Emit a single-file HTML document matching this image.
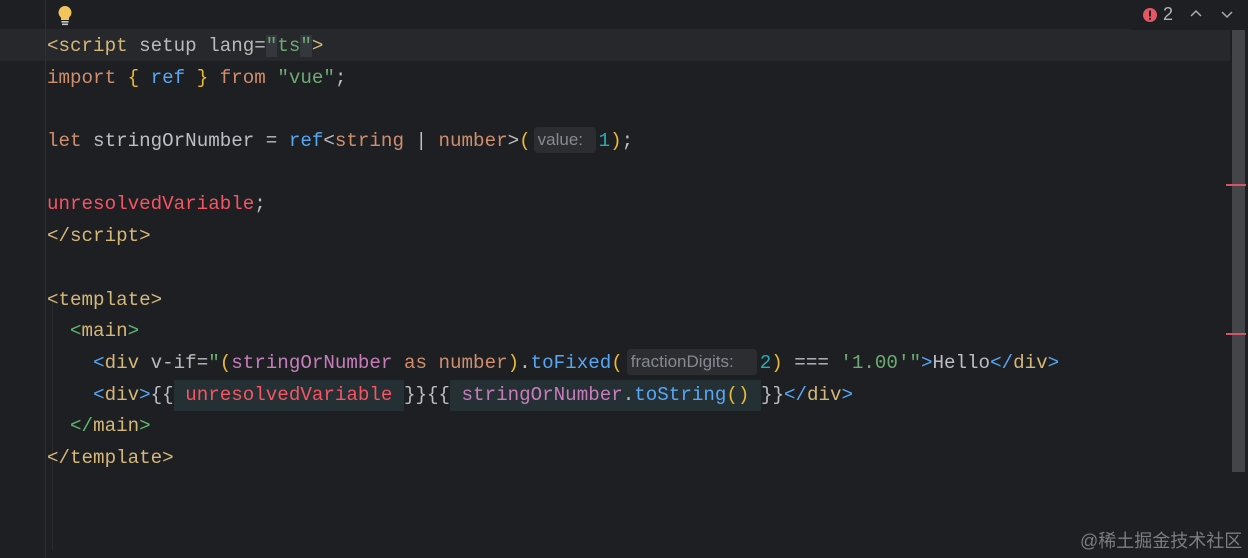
<!DOCTYPE html>
<html><head><meta charset="utf-8"><style>
html,body{margin:0;padding:0;width:1248px;height:558px;overflow:hidden;}
body{background:#1e1f22;position:relative;font-family:"Liberation Mono",monospace;}
.gut{position:absolute;left:45px;top:0;width:1px;height:558px;background:#2e3034;}
.cur{position:absolute;left:0;top:29px;width:1230px;height:32px;background:#26282c;}
.topbar{position:absolute;left:1130px;top:0;width:118px;height:30px;background:#1e1f22;}
.sb{position:absolute;left:1232px;top:30px;width:13px;height:442px;background:#444548;}
.mk{position:absolute;left:1226px;width:20px;height:2px;background:#d5546a;}
.code{position:absolute;left:47px;top:31px;font-size:19.2px;line-height:31.7px;color:#bcbec4;}
.l{height:31.7px;white-space:pre;}
.y{color:#d5b778}.o{color:#cf8e6d}.b{color:#56a8f5}.g{color:#6aab73}.gr{color:#5fb870}.n{color:#2aacb8}.p{color:#c77dbb}.r{color:#f75464}.a{color:#bababa}.br{color:#e8ba36}
.h{display:inline-block;background:#2b2d30;color:#868a91;font-family:"Liberation Sans",sans-serif;font-size:17px;line-height:26px;border-radius:4px;padding:0 4px;vertical-align:1px;box-sizing:border-box;}
.inj{background:#243033;display:inline-block;line-height:31.7px;}
.qb{background:#34373c;}
.wm{position:absolute;left:1080px;top:527px;font-family:"Liberation Sans","Noto Sans CJK SC",sans-serif;font-size:18px;color:#7b7d80;}
</style></head><body>
<div class="cur"></div>
<div class="gut"></div>
<div style="position:absolute;left:52px;top:300px;width:1px;height:250px;background:#292b2f"></div>
<div class="topbar"></div>
<svg style="position:absolute;left:55px;top:5px" width="20" height="22" viewBox="0 0 20 22"><path d="M10 1a6.5 6.5 0 0 0-4 11.6V15h8v-2.4A6.5 6.5 0 0 0 10 1z" fill="#f2c55c"/><rect x="6.5" y="16" width="7" height="1.6" fill="#c7c9cc"/><rect x="7" y="18.5" width="6" height="1.6" fill="#c7c9cc"/></svg>
<svg style="position:absolute;left:1142px;top:7px" width="16" height="16" viewBox="0 0 16 16"><circle cx="8" cy="8" r="7" fill="#e55765"/><rect x="7" y="3.5" width="2" height="6" fill="#1e1f22"/><rect x="7" y="10.8" width="2" height="2" fill="#1e1f22"/></svg>
<div style="position:absolute;left:1163px;top:4px;font-family:'Liberation Sans',sans-serif;font-size:18px;color:#b0b3b8">2</div>
<svg style="position:absolute;left:1189px;top:9px" width="14" height="10"><path d="M2 7l5-5 5 5" fill="none" stroke="#a8abb0" stroke-width="1.5"/></svg>
<svg style="position:absolute;left:1220px;top:9px" width="14" height="10"><path d="M2 3l5 5 5-5" fill="none" stroke="#a8abb0" stroke-width="1.5"/></svg>
<div class="sb"></div>
<div class="mk" style="top:184px"></div>
<div class="mk" style="top:333px"></div>
<div class="code" style="margin-top:0"><div class="l" style="margin-top:-2px;padding-top:2px"><span class="y">&lt;script</span> <span class="a">setup</span> <span class="a">lang</span>=<span class="g"><span class="qb">"</span>ts<span class="qb">"</span></span><span class="y">&gt;</span></div><div class="l"><span class="o">import</span> <span class="br">{</span> <span class="b">ref</span> <span class="br">}</span> <span class="o">from</span> <span class="g">"vue"</span>;</div><div class="l"></div><div class="l"><span class="o">let</span> stringOrNumber = <span class="b">ref</span>&lt;<span class="o">string</span> | <span class="o">number</span>&gt;<span class="br">(</span><span class="h" style="width:62px;margin-left:3px;margin-right:3px">value:</span><span class="n">1</span><span class="br">)</span>;</div><div class="l"></div><div class="l"><span class="r">unresolvedVariable</span>;</div><div class="l"><span class="y">&lt;/script&gt;</span></div><div class="l"></div><div class="l"><span class="y">&lt;template&gt;</span></div><div class="l">  <span class="gr">&lt;</span><span class="y">main</span><span class="gr">&gt;</span></div><div class="l">    <span class="b">&lt;</span><span class="y">div</span> <span class="a">v-if</span>=<span class="g">"</span><span class="br">(</span><span class="p">stringOrNumber</span> <span class="o">as</span> <span class="o">number</span><span class="br">)</span>.<span class="b">toFixed</span><span class="br">(</span><span class="h" style="width:130px;margin-left:4px;margin-right:3px">fractionDigits:</span><span class="n">2</span><span class="br">)</span> === <span class="g">'1.00'</span><span class="g">"</span><span class="b">&gt;</span>Hello<span class="b">&lt;/</span><span class="y">div</span><span class="b">&gt;</span></div><div class="l">    <span class="b">&lt;</span><span class="y">div</span><span class="b">&gt;</span>{{<span class="inj"> <span class="r">unresolvedVariable</span> </span>}}{{<span class="inj"> <span class="p">stringOrNumber</span>.<span class="b">toString</span><span class="br">()</span> </span>}}<span class="b">&lt;/</span><span class="y">div</span><span class="b">&gt;</span></div><div class="l">  <span class="gr">&lt;/</span><span class="y">main</span><span class="gr">&gt;</span></div><div class="l"><span class="y">&lt;/template&gt;</span></div></div>
<div class="wm">@稀土掘金技术社区</div>
</body></html>
